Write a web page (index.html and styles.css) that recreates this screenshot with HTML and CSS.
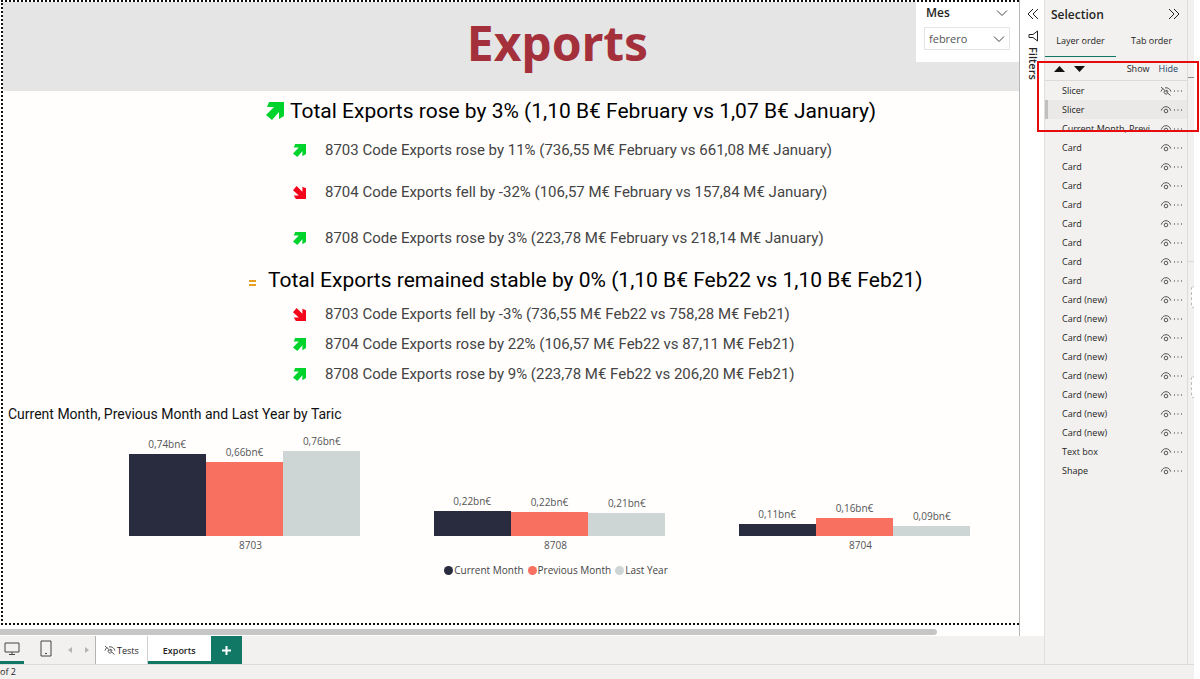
FILE: index.html
```html
<!DOCTYPE html>
<html lang="en">
<head>
<meta charset="utf-8">
<title>Exports</title>
<link rel="stylesheet" href="styles.css">
</head>
<body>
<svg class="defs" aria-hidden="true">
  <symbol id="arrow" viewBox="0 0 18 18"><path d="M3 0H18V14L13 17V10L6 18L0 13L8 5H1Z"/></symbol>
  <symbol id="eye" viewBox="0 0 12 10"><path d="M1.300 5.600C2 3 3.800 1.700 6 1.700S10 3 10.700 5.600"/><circle cx="6" cy="6" r="1.800"/></symbol>
  <symbol id="eye-off" viewBox="0 0 12 10"><path d="M1 1L10.500 9.500M1 5.600C1.400 4.300 2.100 3.200 3 2.600M5 1.800C8 1.400 10.200 3 10.900 5.600M4.600 4.800A1.900 1.900 0 1 0 7.600 7.400M6 4.200A1.900 1.900 0 0 1 8 6"/></symbol>
  <symbol id="chevron" viewBox="0 0 12 8"><path d="M1 1.500L6 6.500L11 1.500"/></symbol>
  <symbol id="dots" viewBox="0 0 10 4"><path d="M1 2H2M4.500 2H5.500M8 2H9"/></symbol>
</svg>
<div class="app">
  <div class="workspace">
    <div class="editor">
      <div class="stage">
        <div class="canvas-pane">
          <main class="canvas">
            <header class="banner">
              <h1 class="banner-title">Exports</h1>
              <section class="slicer">
                <div class="slicer-head"><label for="mes">Mes</label><svg class="chevron"><use href="#chevron"/></svg></div>
                <div class="slicer-box">
                  <select id="mes"><option>febrero</option></select>
                  <svg class="chevron"><use href="#chevron"/></svg>
                </div>
              </section>
            </header>

            <section class="insights">
              <h2 class="headline headline-month"><svg class="trend trend-large up"><use href="#arrow"/></svg>Total Exports rose by 3% (1,10 B€ February vs 1,07 B€ January)</h2>
              <ul class="details details-month">
                <li><svg class="trend up"><use href="#arrow"/></svg>8703 Code Exports rose by 11% (736,55 M€ February vs 661,08 M€ January)</li>
                <li><svg class="trend down"><use href="#arrow"/></svg>8704 Code Exports fell by -32% (106,57 M€ February vs 157,84 M€ January)</li>
                <li><svg class="trend up"><use href="#arrow"/></svg>8708 Code Exports rose by 3% (223,78 M€ February vs 218,14 M€ January)</li>
              </ul>
              <h2 class="headline headline-year"><svg class="equal" viewBox="0 0 7 7"><path d="M0 1H7M0 5H7"/></svg>Total Exports remained stable by 0% (1,10 B€ Feb22 vs 1,10 B€ Feb21)</h2>
              <ul class="details">
                <li><svg class="trend down"><use href="#arrow"/></svg>8703 Code Exports fell by -3% (736,55 M€ Feb22 vs 758,28 M€ Feb21)</li>
                <li><svg class="trend up"><use href="#arrow"/></svg>8704 Code Exports rose by 22% (106,57 M€ Feb22 vs 87,11 M€ Feb21)</li>
                <li><svg class="trend up"><use href="#arrow"/></svg>8708 Code Exports rose by 9% (223,78 M€ Feb22 vs 206,20 M€ Feb21)</li>
              </ul>
            </section>

            <section class="chart">
              <h3 class="chart-title">Current Month, Previous Month and Last Year by Taric</h3>
              <div class="plot">
                <div class="group">
                  <div class="bars">
                    <div class="column">0,74bn€<div class="bar current" style="height:82px"></div></div>
                    <div class="column">0,66bn€<div class="bar previous" style="height:74px"></div></div>
                    <div class="column">0,76bn€<div class="bar last" style="height:85px"></div></div>
                  </div>
                  <div class="category">8703</div>
                </div>
                <div class="group">
                  <div class="bars">
                    <div class="column">0,22bn€<div class="bar current" style="height:25px"></div></div>
                    <div class="column">0,22bn€<div class="bar previous" style="height:24px"></div></div>
                    <div class="column">0,21bn€<div class="bar last" style="height:23px"></div></div>
                  </div>
                  <div class="category">8708</div>
                </div>
                <div class="group">
                  <div class="bars">
                    <div class="column">0,11bn€<div class="bar current" style="height:12px"></div></div>
                    <div class="column">0,16bn€<div class="bar previous" style="height:18px"></div></div>
                    <div class="column">0,09bn€<div class="bar last" style="height:10px"></div></div>
                  </div>
                  <div class="category">8704</div>
                </div>
              </div>
              <ul class="legend">
                <li><span class="dot current"></span>Current Month</li>
                <li><span class="dot previous"></span>Previous Month</li>
                <li><span class="dot last"></span>Last Year</li>
              </ul>
            </section>
          </main>
          <div class="scroll-track"><div class="scroll-thumb"></div></div>
        </div>
        <aside class="filters">
          <button class="icon-button" aria-label="Expand filters"><svg class="double" viewBox="0 0 12 12"><path d="M6 1L1 6L6 11M11 1L6 6L11 11"/></svg></button>
          <svg class="funnel" viewBox="0 0 12 12"><path d="M10.500 1V11L6 7.500H2V4.500H6Z"/></svg>
          <span class="filters-label">Filters</span>
        </aside>
      </div>
      <nav class="pagebar">
        <div class="views">
          <button class="view view-active" aria-label="Desktop layout"><svg viewBox="0 0 16 14" width="16" height="14"><path d="M1 1H15V10H1ZM8 10V12.500M5 12.500H11"/></svg></button>
          <button class="view" aria-label="Mobile layout"><svg viewBox="0 0 12 17" width="12" height="17"><path d="M1 1H11V16H1ZM5 13.500H7"/></svg></button>
        </div>
        <button class="step" aria-label="Previous page"><svg viewBox="0 0 4 6" width="4" height="6"><path d="M4 0V6L0 3Z"/></svg></button>
        <button class="step" aria-label="Next page"><svg viewBox="0 0 4 6" width="4" height="6"><path d="M0 0V6L4 3Z"/></svg></button>
        <button class="tab"><svg class="eye"><use href="#eye-off"/></svg>Tests</button>
        <button class="tab tab-active">Exports</button>
        <button class="add" aria-label="New page"><svg viewBox="0 0 9 9" width="9" height="9"><path d="M4.500 0V9M0 4.500H9"/></svg></button>
      </nav>
    </div>

    <aside class="selection">
      <div class="selection-head"><h2>Selection</h2><button class="icon-button" aria-label="Collapse"><svg class="double" viewBox="0 0 12 12"><path d="M1 1L6 6L1 11M6 1L11 6L6 11"/></svg></button></div>
      <div class="order-tabs"><button class="order-active">Layer order</button><button>Tab order</button></div>
      <div class="order-tools">
        <button aria-label="Move up"><svg viewBox="0 0 11 6" width="11" height="6"><path d="M0 6L5.500 0L11 6Z"/></svg></button>
        <button aria-label="Move down"><svg viewBox="0 0 11 6" width="11" height="6"><path d="M0 0H11L5.500 6Z"/></svg></button>
        <button class="tool-show">Show</button>
        <button class="tool-hide">Hide</button>
      </div>
      <ul class="layers">
        <li><span>Slicer</span><svg class="eye"><use href="#eye-off"/></svg><svg class="dots"><use href="#dots"/></svg></li>
        <li class="layer-selected"><span>Slicer</span><svg class="eye"><use href="#eye"/></svg><svg class="dots"><use href="#dots"/></svg></li>
        <li><span>Current Month, Previ...</span><svg class="eye"><use href="#eye"/></svg><svg class="dots"><use href="#dots"/></svg></li>
        <li><span>Card</span><svg class="eye"><use href="#eye"/></svg><svg class="dots"><use href="#dots"/></svg></li>
        <li><span>Card</span><svg class="eye"><use href="#eye"/></svg><svg class="dots"><use href="#dots"/></svg></li>
        <li><span>Card</span><svg class="eye"><use href="#eye"/></svg><svg class="dots"><use href="#dots"/></svg></li>
        <li><span>Card</span><svg class="eye"><use href="#eye"/></svg><svg class="dots"><use href="#dots"/></svg></li>
        <li><span>Card</span><svg class="eye"><use href="#eye"/></svg><svg class="dots"><use href="#dots"/></svg></li>
        <li><span>Card</span><svg class="eye"><use href="#eye"/></svg><svg class="dots"><use href="#dots"/></svg></li>
        <li><span>Card</span><svg class="eye"><use href="#eye"/></svg><svg class="dots"><use href="#dots"/></svg></li>
        <li><span>Card</span><svg class="eye"><use href="#eye"/></svg><svg class="dots"><use href="#dots"/></svg></li>
        <li><span>Card (new)</span><svg class="eye"><use href="#eye"/></svg><svg class="dots"><use href="#dots"/></svg></li>
        <li><span>Card (new)</span><svg class="eye"><use href="#eye"/></svg><svg class="dots"><use href="#dots"/></svg></li>
        <li><span>Card (new)</span><svg class="eye"><use href="#eye"/></svg><svg class="dots"><use href="#dots"/></svg></li>
        <li><span>Card (new)</span><svg class="eye"><use href="#eye"/></svg><svg class="dots"><use href="#dots"/></svg></li>
        <li><span>Card (new)</span><svg class="eye"><use href="#eye"/></svg><svg class="dots"><use href="#dots"/></svg></li>
        <li><span>Card (new)</span><svg class="eye"><use href="#eye"/></svg><svg class="dots"><use href="#dots"/></svg></li>
        <li><span>Card (new)</span><svg class="eye"><use href="#eye"/></svg><svg class="dots"><use href="#dots"/></svg></li>
        <li><span>Card (new)</span><svg class="eye"><use href="#eye"/></svg><svg class="dots"><use href="#dots"/></svg></li>
        <li><span>Text box</span><svg class="eye"><use href="#eye"/></svg><svg class="dots"><use href="#dots"/></svg></li>
        <li><span>Shape</span><svg class="eye"><use href="#eye"/></svg><svg class="dots"><use href="#dots"/></svg></li>
      </ul>
      <div class="callout"></div>
    </aside>
    <div class="rail"><div class="rail-top"></div><div class="rail-mid"></div><div class="well"></div><div class="well"></div></div>
  </div>
  <footer class="statusbar">of 2</footer>
</div>
</body>
</html>
```

FILE: styles.css
```css
* { box-sizing: border-box; }
body { margin: 0; background: #fff; font-family: "Open Sans", "Noto Sans", sans-serif; font-size: 10px; color: #252423; }
h1, h2, h3, ul { margin: 0; padding: 0; font-weight: 400; }
ul { list-style: none; }
button { border: 0; padding: 0; background: none; font: inherit; color: inherit; }
svg { fill: none; stroke: #444; flex: none; display: block; }
.defs { position: absolute; width: 0; height: 0; }

.app { min-height: 100vh; margin-right: 6px; display: flex; flex-direction: column; background: #f2f1f0; }
.workspace { flex: 1; display: grid; grid-template-columns: minmax(0, 1fr) 143px 7px; }
.editor { display: flex; flex-direction: column; margin-right: -1px; }
.stage { flex: 1; display: flex; background: #fff; }
.canvas-pane { flex: 1; display: flex; flex-direction: column; border-right: 1px solid #b8b6b4; }
.canvas { flex: 1; margin-left: 1px; border: 2px dotted #111; border-right: 0; background: #fffefd; }

.banner { display: flex; align-items: flex-start; height: 89px; background: #e5e5e5; }
.banner-title { flex: 1; padding-left: 196px; text-align: center; font-size: 48px; line-height: 82px; font-weight: 700; color: #a4303b; font-family: "Noto Sans", sans-serif; }
.slicer { width: 103px; padding: 2px 9px 12px 8px; background: #fff; }
.slicer-head { display: flex; justify-content: space-between; align-items: center; padding: 0 2px; font-size: 12px; line-height: 17px; font-weight: 600; }
.slicer-box { display: grid; margin-top: 6px; border: 1px solid #e5e5e5; align-items: center; }
.slicer-box > * { grid-area: 1 / 1; }
.slicer-box .chevron { justify-self: end; margin-right: 4px; pointer-events: none; }
.slicer-box select { appearance: none; width: 100%; height: 21px; border: 0; padding: 0 4px; background: #fff; font: 11px "Open Sans", sans-serif; color: #555; }
.chevron { width: 12px; height: 8px; }

.insights { font-family: Roboto, sans-serif; }
.headline, .details li { display: flex; align-items: center; }
.headline { font-size: 21px; color: #000; height: 40px; }
.headline-month { padding-left: 263px; gap: 6px; }
.headline-year { height: 38px; padding-left: 246px; gap: 12px; }
.equal { width: 7px; height: 7px; stroke: #e8a020; stroke-width: 2; margin-top: 6px; }
.details { padding-left: 290px; font-size: 15px; color: #444; }
.details li { gap: 19px; height: 30px; }
.details-month li { height: 46px; }
.details-month li:first-child { height: 38px; }
.trend { width: 13px; height: 13px; stroke: none; }
.trend-large { width: 18px; height: 18px; }
.up { fill: #00d42c; }
.down { fill: #f5051c; transform: rotate(90deg); }

.chart { padding: 15px 0 20px; }
.chart-title { padding-left: 5px; font: 14px/20px Roboto, sans-serif; color: #111; }
.plot { display: grid; grid-template-columns: repeat(3, minmax(0, 1fr)); padding: 0 12px 0 89px; color: #555; }
.group { display: flex; flex-direction: column; align-items: center; }
.bars { width: 76%; height: 112px; display: flex; align-items: flex-end; }
.column { flex: 1; text-align: center; line-height: 20px; }
.current { background: #292b3f; }
.previous { background: #f87060; }
.last { background: #cdd6d5; }
.category { padding-left: 12px; line-height: 18px; }
.legend { display: flex; justify-content: center; gap: 4px; padding-left: 90px; margin-top: 7px; color: #444; line-height: 18px; }
.legend li { display: flex; align-items: center; gap: 1px; }
.dot { width: 9px; height: 9px; border-radius: 50%; }
.scroll-track { height: 11px; padding: 4px 0 1px; }
.scroll-thumb { width: 92%; height: 6px; border-radius: 0 3px 3px 0; background: #c6c6c6; }

.filters { width: 25px; display: flex; flex-direction: column; align-items: center; padding-top: 8px; }
.double { width: 12px; height: 12px; stroke: #222; }
.funnel { width: 12px; height: 12px; margin: 10px 0 5px; stroke: #222; }
.filters-label { writing-mode: vertical-rl; font-size: 11px; line-height: 14px; font-weight: 600; }

.pagebar { height: 28px; display: flex; align-items: stretch; font-size: 9px; }
.views { display: flex; gap: 10px; padding-right: 3px; }
.view { width: 24px; display: flex; align-items: center; justify-content: center; border-bottom: 3px solid transparent; }
.view-active { border-color: #117865; }
.step { width: 17px; display: flex; align-items: center; justify-content: center; }
.step svg { fill: #b5b3b1; stroke: none; }
.tab { padding: 0 8px; background: #fff; border-left: 1px solid #b5b3b1; display: flex; align-items: center; gap: 1px; }
.tab-active { padding: 0 15px; border-left-color: #d0d0d0; box-shadow: inset 0 -3px #117865; font-weight: 600; }
.add { width: 31px; background: #117865; display: grid; place-items: center; }
.add svg { stroke: #fff; stroke-width: 2; }
.statusbar { border-top: 1px solid #dddbd9; font-size: 9px; line-height: 14px; }

.selection { position: relative; border-left: 1px solid #e1dfdd; font-size: 9px; }
.selection-head { display: flex; justify-content: space-between; align-items: center; height: 28px; padding: 0 7px 0 6px; }
.selection-head h2 { font-size: 12px; font-weight: 600; }
.order-tabs { display: flex; height: 29px; }
.order-tabs button { flex: 1; padding-bottom: 3px; border-bottom: 1px solid transparent; }
.order-tabs .order-active { border-color: #117865; }
.order-tools { display: flex; align-items: center; gap: 9px; height: 24px; padding: 0 9px; border-bottom: 1px solid #dddbd9; }
.order-tools svg { fill: #111; stroke: none; }
.tool-show { margin-left: auto; }
.tool-hide { color: #1c3f66; }
.layers li { display: flex; align-items: center; height: 19px; padding: 0 4px 0 17px; }
.layers span { flex: 1; white-space: nowrap; }
.layers .layer-selected { background: #eae9e8; border-left: 3px solid #c2c0be; padding-left: 14px; }
.eye { width: 12px; height: 10px; stroke: #555; stroke-width: 1; }
.dots { width: 10px; height: 4px; margin-left: 1px; stroke: #333; stroke-width: 1; }
.callout { position: absolute; left: -8px; top: 61px; width: 162px; height: 71px; border: 2px solid #e60c0c; pointer-events: none; }

.rail { border-left: 1px solid #dddbd9; }
.rail-top { height: 78px; border-bottom: 1px solid #888; }
.rail-mid { height: 184px; border-bottom: 1px solid #dddbd9; }
.well { height: 22px; margin: 24px 0 68px 3px; border: 1px dashed #bbb; border-right: 0; border-radius: 3px 0 0 3px; background: #fff; }
```
